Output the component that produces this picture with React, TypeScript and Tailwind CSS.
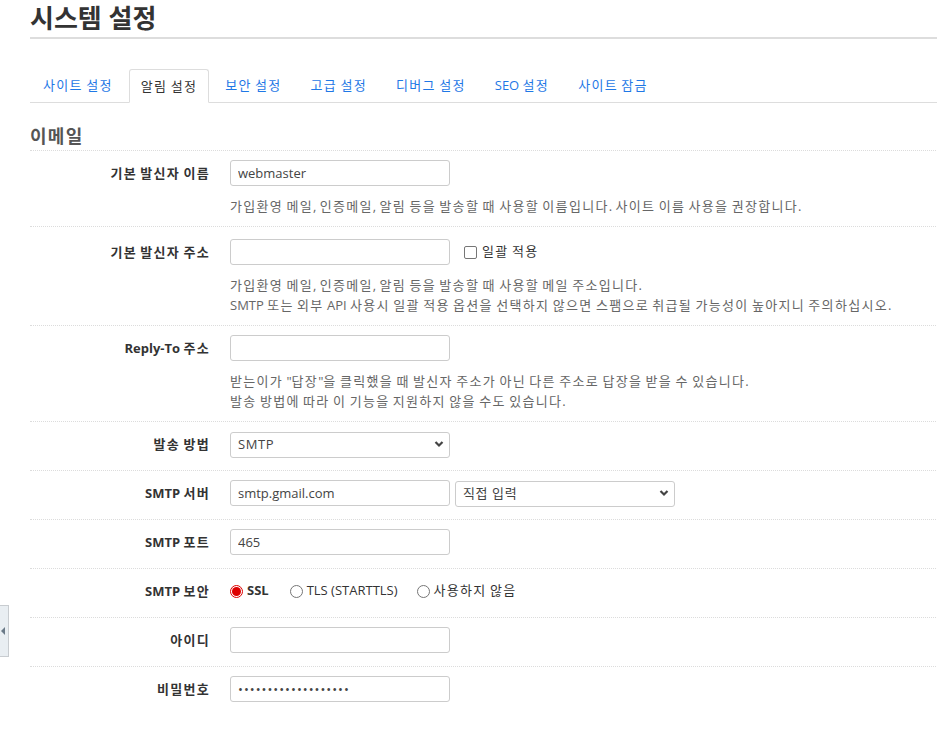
import React from "react";

const font = { fontFamily: '"Open Sans", "Noto Sans CJK KR", sans-serif' };

const tabs = ["사이트 설정", "알림 설정", "보안 설정", "고급 설정", "디버그 설정", "SEO 설정", "사이트 잠금"];

// Hangul runs are set a touch wider so lines keep the reference width
function K({ text, track = "tracking-[1.3px]" }: { text: string; track?: string }) {
  const parts = text.split(/([\uAC00-\uD7A3]+)/);
  return (
    <>
      {parts.map((p, i) =>
        /[\uAC00-\uD7A3]/.test(p) ? (
          <span key={i} className={track}>
            {p}
          </span>
        ) : (
          <React.Fragment key={i}>{p}</React.Fragment>
        )
      )}
    </>
  );
}

function Row({
  label,
  children,
  help,
  top = "pt-[9px]",
}: {
  label: string;
  children: React.ReactNode;
  help?: string[];
  top?: string;
}) {
  return (
    <div className={`flex border-t border-dotted border-[#dcdcdc] ${top} ${help ? "pb-[10px]" : "pb-[13px]"}`}>
      <div className="w-[200px] shrink-0 pr-[20px] text-right text-[13px] font-bold leading-[26px] text-[#333]">
        <K text={label} />
      </div>
      <div className="flex-1">
        <div className="flex h-[26px] items-center">{children}</div>
        {help && (
          <div className="mt-[10px] text-[13px] leading-[20px] text-[#666]">
            {help.map((h) => (
              <p key={h}>
                <K text={h} />
              </p>
            ))}
          </div>
        )}
      </div>
    </div>
  );
}

function TextInput({ value = "", type = "text" }: { value?: string; type?: string }) {
  return (
    <input
      type={type}
      defaultValue={value}
      className={`h-[26px] w-[220px] rounded-[3px] border border-[#ccc] bg-white px-[7px] text-[13px] text-[#444] outline-none ${
        type === "password" ? "tracking-[1px]" : ""
      }`}
      style={font}
    />
  );
}

function Select({ value, className = "" }: { value: string; className?: string }) {
  return (
    <div className={`relative h-[26px] w-[220px] ${className}`}>
      <select
        defaultValue={value}
        className="h-[26px] w-full appearance-none rounded-[3px] border border-[#ccc] bg-white px-[7px] text-[13px] tracking-[0.6px] text-[#444] outline-none"
        style={font}
      >
        <option>{value}</option>
      </select>
      <svg className="pointer-events-none absolute right-[6px] top-[9px]" width="10" height="8" viewBox="0 0 10 8">
        <path d="M1.5 2 L5 5.5 L8.5 2" fill="none" stroke="#444" strokeWidth="2.2" />
      </svg>
    </div>
  );
}

function Radio({ checked, label, bold, gap = "mr-[21px]" }: { checked?: boolean; label: string; bold?: boolean; gap?: string }) {
  return (
    <label className={`${gap} flex items-center text-[13px] text-[#333]`}>
      {checked ? (
        <span className="flex h-[13px] w-[13px] items-center justify-center rounded-full border border-[#d00]">
          <span className="h-[9px] w-[9px] rounded-full bg-[#d00]" />
        </span>
      ) : (
        <span className="h-[13px] w-[13px] rounded-full border border-[#767676] bg-white" />
      )}
      <span className={`ml-[4px] ${bold ? "font-bold" : ""}`}>
        <K text={label} />
      </span>
    </label>
  );
}

export default function App() {
  return (
    <div className="relative min-h-[740px] overflow-hidden bg-white" style={font}>
      <div className="pl-[30px]">
        <h1 className="w-[1000px] border-b-2 border-[#ddd] pb-[2px] pt-[1px] text-[26px] font-bold leading-[34px] text-[#333]">
          시스템 설정
        </h1>

        <ul className="mt-[30px] flex w-[1000px] border-b border-[#ddd] text-[13px]">
          {tabs.map((t, i) =>
            i === 1 ? (
              <li
                key={t}
                className="-mb-px mr-[3px] rounded-t-[3px] border border-b-white border-[#ddd] bg-white px-[11px] leading-[32px] text-[#333]"
              >
                <K text={t} />
              </li>
            ) : (
              <li key={t} className="mr-[3px] px-[13px] leading-[32px] text-[#1f78e6]">
                <K text={t} />
              </li>
            )
          )}
        </ul>

        <h2 className="mt-[21px] w-[1000px] pb-[1px] text-[18px] font-bold leading-[25px] text-[#555]">
          <K text="이메일" />
        </h2>

        <div className="w-[1000px]">
          <Row
            label="기본 발신자 이름"
            help={["가입환영 메일, 인증메일, 알림 등을 발송할 때 사용할 이름입니다. 사이트 이름 사용을 권장합니다."]}
          >
            <TextInput value="webmaster" />
          </Row>
          <Row
            label="기본 발신자 주소"
            top="pt-[12px]"
            help={[
              "가입환영 메일, 인증메일, 알림 등을 발송할 때 사용할 메일 주소입니다.",
              "SMTP 또는 외부 API 사용시 일괄 적용 옵션을 선택하지 않으면 스팸으로 취급될 가능성이 높아지니 주의하십시오.",
            ]}
          >
            <TextInput />
            <label className="ml-[14px] flex items-center text-[13px] text-[#333]">
              <span className="h-[13px] w-[13px] rounded-[2px] border border-[#767676] bg-white" />
              <span className="ml-[5px]">
                <K text="일괄 적용" />
              </span>
            </label>
          </Row>
          <Row
            label="Reply-To 주소"
            help={[
              "받는이가 \"답장\"을 클릭했을 때 발신자 주소가 아닌 다른 주소로 답장을 받을 수 있습니다.",
              "발송 방법에 따라 이 기능을 지원하지 않을 수도 있습니다.",
            ]}
          >
            <TextInput />
          </Row>
          <Row label="발송 방법">
            <Select value="SMTP" />
          </Row>
          <Row label="SMTP 서버">
            <TextInput value="smtp.gmail.com" />
            <Select value="직접 입력" className="ml-[5px]" />
          </Row>
          <Row label="SMTP 포트">
            <TextInput value="465" />
          </Row>
          <Row label="SMTP 보안">
            <Radio checked bold label="SSL" />
            <Radio label="TLS (STARTTLS)" gap="mr-[19px]" />
            <Radio label="사용하지 않음" />
          </Row>
          <Row label="아이디">
            <TextInput />
          </Row>
          <Row label="비밀번호">
            <TextInput type="password" value="abcdefghijklmnopqrs" />
          </Row>
        </div>
      </div>

      <div className="absolute left-0 top-[605px] flex h-[52px] w-[9px] items-center border border-l-0 border-[#c8ccd0] bg-[#e9eef2]">
        <svg width="5" height="8" viewBox="0 0 5 8" className="ml-[1px]">
          <path d="M4 0 L0 4 L4 8 Z" fill="#6b7a88" />
        </svg>
      </div>
    </div>
  );
}
